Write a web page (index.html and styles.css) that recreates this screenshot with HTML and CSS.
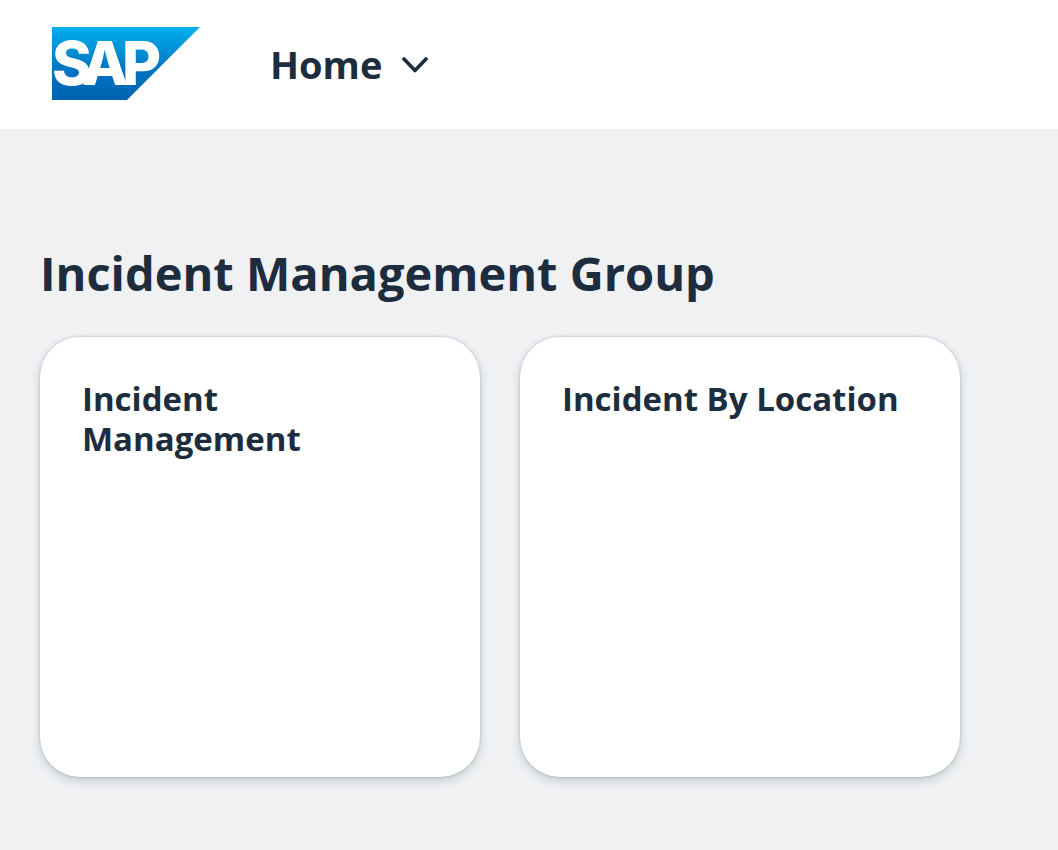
FILE: index.html
```
<!DOCTYPE html>
<html lang="en">
<head>
<meta charset="utf-8">
<meta name="viewport" content="width=device-width, initial-scale=1">
<title>Home</title>
<link rel="stylesheet" href="styles.css">
</head>
<body>
<header class="shell">
  <a class="logo" href="#" aria-label="SAP">
    <svg class="logo-mark" viewBox="0 0 148 74" aria-hidden="true">
      <defs>
        <linearGradient id="logo-blue" x1="0" y1="0" x2="0" y2="1">
          <stop offset="0" stop-color="#00aeef"/>
          <stop offset="0.25" stop-color="#0097dc"/>
          <stop offset="0.6" stop-color="#0073c0"/>
          <stop offset="1" stop-color="#0062b1"/>
        </linearGradient>
      </defs>
      <path d="M0 0H148L75 73H0Z" fill="url(#logo-blue)"/>
      <text class="logo-text" x="0 30 70" y="58">SAP</text>
    </svg>
  </a>
  <button class="menu" type="button" aria-haspopup="true">
    <span>Home</span>
    <svg class="chevron" viewBox="0 0 26 18" aria-hidden="true">
      <path d="M2 4L13 15.5L24 4" fill="none" stroke="currentColor" stroke-width="3.6" stroke-linecap="round" stroke-linejoin="round"/>
    </svg>
  </button>
</header>
<main class="content">
  <h1 class="group-title">Incident Management Group</h1>
  <div class="tiles">
    <a class="tile" href="#"><span class="tile-title">Incident Management</span></a>
    <a class="tile" href="#"><span class="tile-title">Incident By Location</span></a>
  </div>
</main>
</body>
</html>
```
FILE: styles.css
```
* {
  box-sizing: border-box;
}

body {
  margin: 0;
  background: #eff1f3;
  color: #1d2d3e;
  font-family: "Open Sans", "Noto Sans", sans-serif;
  font-weight: 700;
}

.shell {
  display: flex;
  align-items: center;
  gap: 70px;
  padding: 27px 52px 28px;
  background: #fff;
}

.logo {
  display: block;
}

.logo-mark {
  display: block;
  width: 148px;
  height: 74px;
  overflow: visible;
}

.logo-text {
  fill: #fff;
  font-family: Inter, "Open Sans", sans-serif;
  font-size: 60px;
  font-weight: 800;
}

.menu {
  display: flex;
  align-items: center;
  gap: 20px;
  padding: 0;
  border: 0;
  background: none;
  color: inherit;
  font: inherit;
  font-size: 38px;
  line-height: 48px;
}

.chevron {
  width: 26px;
  height: 18px;
}

.content {
  padding: 112px 40px 72px;
}

.group-title {
  margin: 0 0 32px;
  font-size: 47px;
  line-height: 64px;
}

.tiles {
  display: flex;
  flex-wrap: wrap;
  gap: 40px;
}

.tile {
  width: 440px;
  min-height: 440px;
  padding: 42px;
  border-radius: 40px;
  background: #fff;
  box-shadow: 0 0 3px rgba(34, 53, 72, 0.24), 0 4px 10px rgba(34, 53, 72, 0.2);
  color: inherit;
  text-decoration: none;
}

.tile-title {
  display: block;
  font-size: 33px;
  line-height: 40px;
}
```
